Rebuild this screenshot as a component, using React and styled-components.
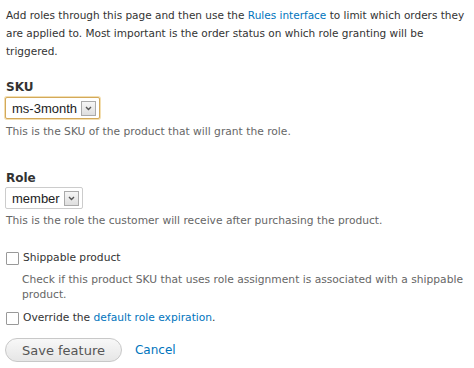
import React from 'react';
import styled, { createGlobalStyle } from 'styled-components';

const GlobalStyle = createGlobalStyle`
  html, body {
    margin: 0;
    padding: 0;
    background: #fff;
  }
  body {
    font-family: "DejaVu Sans", "Open Sans", sans-serif;
    font-size: 10.7px;
    color: #333;
  }
`;

const Page = styled.div`
  width: 474px;
  height: 368px;
  padding: 6px 0 0 6px;
  box-sizing: border-box;
  overflow: hidden;
`;

const Intro = styled.p`
  margin: 0;
  font-size: 10.5px;
  line-height: 18px;
  color: #333;
`;

const Link = styled.a`
  color: #0074bd;
  text-decoration: none;
`;

const Field = styled.div`
  margin-top: ${(p) => p.$top}px;
`;

const Label = styled.div`
  font-weight: bold;
  font-size: 12px;
  color: #333;
  line-height: 16px;
`;

const SelectBox = styled.div`
  display: inline-flex;
  align-items: center;
  gap: 4px;
  margin-top: ${(p) => (p.$focus ? 2 : 1)}px;
  margin-left: -1px;
  height: 20px;
  padding: 0 3px 0 6px;
  border: 1px solid ${(p) => (p.$focus ? '#d3a95a' : '#ccc')};
  box-shadow: ${(p) => (p.$focus ? '0 0 0 1px #f3dfb2' : 'none')};
  border-radius: 2px;
  background: #fff;
  font-family: "Liberation Sans", Arial, sans-serif;
  font-size: 13px;
  color: #222;
`;

const Arrow = styled.span`
  display: flex;
  align-items: center;
  justify-content: center;
  width: 13px;
  height: 13px;
  border: 1px solid #aaa;
  background: linear-gradient(#f6f6f6, #dedede);
`;

const Description = styled.div`
  color: #666;
  line-height: 15px;
  margin-top: ${(p) => p.$top || 4}px;
  padding-left: ${(p) => p.$indent || 0}px;
`;

const CheckRow = styled.label`
  display: flex;
  align-items: center;
  gap: 4px;
  color: #333;
  line-height: 16px;
`;

const Box = styled.span`
  width: 11px;
  height: 11px;
  border: 1px solid #999;
  border-radius: 1px;
  background: #fff;
`;

const Actions = styled.div`
  display: flex;
  align-items: center;
  gap: 13px;
  margin-top: 12px;
  margin-left: -1px;
`;

const Button = styled.button`
  height: 24px;
  padding: 0 16px;
  border: 1px solid #c8c8c8;
  border-radius: 12px;
  background: linear-gradient(#f8f8f8, #e6e6e6);
  font-family: "DejaVu Sans", sans-serif;
  font-size: 13px;
  color: #555;
`;

const CancelLink = styled(Link)`
  font-size: 12px;
`;

const ArrowIcon = () => (
  <svg width="7" height="5" viewBox="0 0 7 5">
    <path d="M1 1 L3.5 3.5 L6 1" fill="none" stroke="#555" strokeWidth="1.4" />
  </svg>
);

const Select = ({ value, focus }) => (
  <SelectBox $focus={focus}>
    {value}
    <Arrow>
      <ArrowIcon />
    </Arrow>
  </SelectBox>
);

const App = () => (
  <>
    <GlobalStyle />
    <Page>
      <Intro>
        Add roles through this page and then use the <Link href="#">Rules interface</Link> to
        limit which orders they are applied to. Most important is the order status on which role
        granting will be triggered.
      </Intro>

      <Field $top={19}>
        <Label>SKU</Label>
        <Select value="ms-3month" focus />
        <Description $top={5}>This is the SKU of the product that will grant the role.</Description>
      </Field>

      <Field $top={31}>
        <Label>Role</Label>
        <Select value="member" />
        <Description>This is the role the customer will receive after purchasing the product.</Description>
      </Field>

      <Field $top={22}>
        <CheckRow>
          <Box />
          Shippable product
        </CheckRow>
        <Description $indent={16} $top={6}>
          Check if this product SKU that uses role assignment is associated with a shippable
          product.
        </Description>
      </Field>

      <Field $top={8}>
        <CheckRow>
          <Box />
          <span>
            Override the <Link href="#">default role expiration</Link>.
          </span>
        </CheckRow>
      </Field>

      <Actions>
        <Button>Save feature</Button>
        <CancelLink href="#">Cancel</CancelLink>
      </Actions>
    </Page>
  </>
);

export default App;
